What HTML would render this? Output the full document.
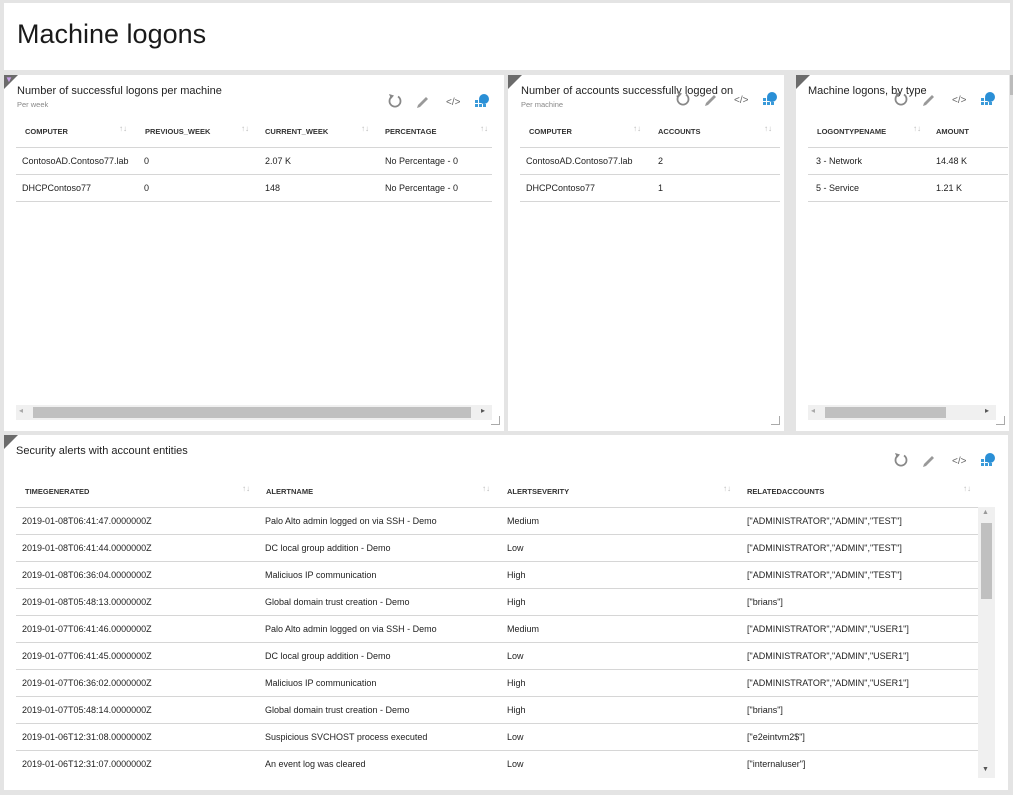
<!DOCTYPE html>
<html><head><meta charset="utf-8"><style>
*{margin:0;padding:0;box-sizing:border-box}
body{width:1013px;height:795px;background:#e4e4e4;font-family:"Liberation Sans",sans-serif;color:#222;position:relative;overflow:hidden}
.a{position:absolute}
.p{position:absolute;background:#fff;overflow:hidden}
.tri{position:absolute;left:0;top:0;width:0;height:0;border-top:14px solid #6b6b6b;border-right:14px solid transparent}
.ttl{position:absolute;font-size:11px;color:#222;white-space:nowrap}
.sub{position:absolute;font-size:7.5px;color:#888}
.th{position:absolute;font-size:7.5px;font-weight:bold;color:#333;white-space:nowrap}
.td{position:absolute;font-size:9px;color:#222;white-space:nowrap}
.ar{position:absolute;font-size:8px;color:#bbb}
.ln{position:absolute;height:1px;background:#d6d6d6}
.rs{position:absolute;width:9px;height:9px;border-right:1px solid #aaa;border-bottom:1px solid #aaa}
</style></head><body>
<div class="p" style="left:4px;top:3px;width:1006px;height:67px"><div class="a" style="left:13px;top:16px;font-size:27px;color:#1a1a1a">Machine logons</div></div>

<!-- panel 1 -->
<div class="p" style="left:4px;top:75px;width:500px;height:356px">
<div class="tri"></div><div class="a" style="left:1px;top:0;font-size:8px;color:#c9a0e8">▼</div>
<div class="ttl" style="left:13px;top:10px">Number of successful logons per machine</div>
<div class="sub" style="left:13px;top:25px">Per week</div>
<svg class="a" style="left:382px;top:18px" width="110" height="16"><path d="M6 3.5 A5.5 5.5 0 1 0 12 3.5" fill="none" stroke="#888" stroke-width="1.8"/><path d="M3 1 L8 2.5 L5 6 Z" fill="#888"/><path d="M32 12 L40 4 L42 6 L34 14 L31 15Z" fill="#999"/><text x="60" y="12" font-size="10" fill="#666" font-family="Liberation Sans">&lt;/&gt;</text><g fill="#3a9ad9"><rect x="89" y="7" width="3" height="3"/><rect x="93" y="7" width="3" height="3"/><rect x="89" y="11" width="3" height="3"/><rect x="93" y="11" width="3" height="3"/><rect x="97" y="11" width="3" height="3"/></g><circle cx="98" cy="6" r="5" fill="#2a8fd6"/></svg>
<div class="th" style="left:21px;top:52px">COMPUTER</div><div class="ar" style="left:115px;top:49px">↑↓</div>
<div class="th" style="left:141px;top:52px">PREVIOUS_WEEK</div><div class="ar" style="left:237px;top:49px">↑↓</div>
<div class="th" style="left:261px;top:52px">CURRENT_WEEK</div><div class="ar" style="left:357px;top:49px">↑↓</div>
<div class="th" style="left:381px;top:52px">PERCENTAGE</div><div class="ar" style="left:476px;top:49px">↑↓</div>
<div class="ln" style="left:12px;top:72px;width:476px"></div>
<div class="td" style="left:18px;top:81px">ContosoAD.Contoso77.lab</div><div class="td" style="left:140px;top:81px">0</div><div class="td" style="left:261px;top:81px">2.07 K</div><div class="td" style="left:381px;top:81px">No Percentage - 0</div>
<div class="ln" style="left:12px;top:99px;width:476px"></div>
<div class="td" style="left:18px;top:108px">DHCPContoso77</div><div class="td" style="left:140px;top:108px">0</div><div class="td" style="left:261px;top:108px">148</div><div class="td" style="left:381px;top:108px">No Percentage - 0</div>
<div class="ln" style="left:12px;top:126px;width:476px"></div>
<div class="a" style="left:12px;top:330px;width:476px;height:15px;background:#f0f0f0"></div>
<div class="a" style="left:29px;top:332px;width:438px;height:11px;background:#c0c0c0"></div>
<div class="a" style="left:15px;top:331px;font-size:8px;color:#aaa">◂</div><div class="a" style="left:477px;top:331px;font-size:8px;color:#555">▸</div>
<div class="rs" style="left:487px;top:341px"></div>
</div>

<!-- panel 2 -->
<div class="p" style="left:508px;top:75px;width:276px;height:356px">
<div class="tri"></div>
<div class="ttl" style="left:13px;top:10px">Number of accounts successfully logged on</div>
<div class="sub" style="left:13px;top:25px">Per machine</div>
<svg class="a" style="left:166px;top:16px" width="110" height="16"><path d="M6 3.5 A5.5 5.5 0 1 0 12 3.5" fill="none" stroke="#888" stroke-width="1.8"/><path d="M3 1 L8 2.5 L5 6 Z" fill="#888"/><path d="M32 12 L40 4 L42 6 L34 14 L31 15Z" fill="#999"/><text x="60" y="12" font-size="10" fill="#666" font-family="Liberation Sans">&lt;/&gt;</text><g fill="#3a9ad9"><rect x="89" y="7" width="3" height="3"/><rect x="93" y="7" width="3" height="3"/><rect x="89" y="11" width="3" height="3"/><rect x="93" y="11" width="3" height="3"/><rect x="97" y="11" width="3" height="3"/></g><circle cx="98" cy="6" r="5" fill="#2a8fd6"/></svg>
<div class="th" style="left:21px;top:52px">COMPUTER</div><div class="ar" style="left:125px;top:49px">↑↓</div>
<div class="th" style="left:150px;top:52px">ACCOUNTS</div><div class="ar" style="left:256px;top:49px">↑↓</div>
<div class="ln" style="left:12px;top:72px;width:260px"></div>
<div class="td" style="left:18px;top:81px">ContosoAD.Contoso77.lab</div><div class="td" style="left:150px;top:81px">2</div>
<div class="ln" style="left:12px;top:99px;width:260px"></div>
<div class="td" style="left:18px;top:108px">DHCPContoso77</div><div class="td" style="left:150px;top:108px">1</div>
<div class="ln" style="left:12px;top:126px;width:260px"></div>
<div class="rs" style="left:263px;top:341px"></div>
</div>

<!-- panel 3 -->
<div class="p" style="left:796px;top:75px;width:213px;height:356px">
<div class="tri"></div>
<div class="ttl" style="left:12px;top:10px">Machine logons, by type</div>
<svg class="a" style="left:96px;top:16px" width="110" height="16"><path d="M6 3.5 A5.5 5.5 0 1 0 12 3.5" fill="none" stroke="#888" stroke-width="1.8"/><path d="M3 1 L8 2.5 L5 6 Z" fill="#888"/><path d="M32 12 L40 4 L42 6 L34 14 L31 15Z" fill="#999"/><text x="60" y="12" font-size="10" fill="#666" font-family="Liberation Sans">&lt;/&gt;</text><g fill="#3a9ad9"><rect x="89" y="7" width="3" height="3"/><rect x="93" y="7" width="3" height="3"/><rect x="89" y="11" width="3" height="3"/><rect x="93" y="11" width="3" height="3"/><rect x="97" y="11" width="3" height="3"/></g><circle cx="98" cy="6" r="5" fill="#2a8fd6"/></svg>
<div class="th" style="left:21px;top:52px">LOGONTYPENAME</div><div class="ar" style="left:117px;top:49px">↑↓</div>
<div class="th" style="left:140px;top:52px">AMOUNT</div>
<div class="ln" style="left:12px;top:72px;width:200px"></div>
<div class="td" style="left:20px;top:81px">3 - Network</div><div class="td" style="left:140px;top:81px">14.48 K</div>
<div class="ln" style="left:12px;top:99px;width:200px"></div>
<div class="td" style="left:20px;top:108px">5 - Service</div><div class="td" style="left:140px;top:108px">1.21 K</div>
<div class="ln" style="left:12px;top:126px;width:200px"></div>
<div class="a" style="left:12px;top:330px;width:188px;height:15px;background:#f0f0f0"></div>
<div class="a" style="left:29px;top:332px;width:121px;height:11px;background:#c0c0c0"></div>
<div class="a" style="left:15px;top:331px;font-size:8px;color:#aaa">◂</div><div class="a" style="left:189px;top:331px;font-size:8px;color:#555">▸</div>
<div class="rs" style="left:200px;top:341px"></div>
</div>
<div class="a" style="left:1010px;top:75px;width:3px;height:20px;background:#bbb"></div>

<!-- bottom -->
<div class="p" style="left:4px;top:435px;width:1004px;height:355px">
<div class="tri"></div>
<div class="ttl" style="left:12px;top:10px">Security alerts with account entities</div>
<svg class="a" style="left:888px;top:17px" width="110" height="16"><path d="M6 3.5 A5.5 5.5 0 1 0 12 3.5" fill="none" stroke="#888" stroke-width="1.8"/><path d="M3 1 L8 2.5 L5 6 Z" fill="#888"/><path d="M32 12 L40 4 L42 6 L34 14 L31 15Z" fill="#999"/><text x="60" y="12" font-size="10" fill="#666" font-family="Liberation Sans">&lt;/&gt;</text><g fill="#3a9ad9"><rect x="89" y="7" width="3" height="3"/><rect x="93" y="7" width="3" height="3"/><rect x="89" y="11" width="3" height="3"/><rect x="93" y="11" width="3" height="3"/><rect x="97" y="11" width="3" height="3"/></g><circle cx="98" cy="6" r="5" fill="#2a8fd6"/></svg>
<div class="th" style="left:21px;top:52px">TIMEGENERATED</div><div class="ar" style="left:238px;top:49px">↑↓</div>
<div class="th" style="left:262px;top:52px">ALERTNAME</div><div class="ar" style="left:478px;top:49px">↑↓</div>
<div class="th" style="left:503px;top:52px">ALERTSEVERITY</div><div class="ar" style="left:719px;top:49px">↑↓</div>
<div class="th" style="left:743px;top:52px">RELATEDACCOUNTS</div><div class="ar" style="left:959px;top:49px">↑↓</div>
<div class="ln" style="left:12px;top:72px;width:962px"></div>
<div class="a" style="left:974px;top:72px;width:17px;height:271px;background:#f0f0f0"></div>
<div class="a" style="left:977px;top:88px;width:11px;height:76px;background:#c0c0c0"></div>
<div class="a" style="left:978px;top:74px;font-size:7px;color:#999">▲</div>
<div class="a" style="left:978px;top:331px;font-size:7px;color:#555">▼</div>
<div id="rows"></div>
</div>
<script>
var d=[["2019-01-08T06:41:47.0000000Z","Palo Alto admin logged on via SSH - Demo","Medium",'["ADMINISTRATOR","ADMIN","TEST"]'],
["2019-01-08T06:41:44.0000000Z","DC local group addition - Demo","Low",'["ADMINISTRATOR","ADMIN","TEST"]'],
["2019-01-08T06:36:04.0000000Z","Maliciuos IP communication","High",'["ADMINISTRATOR","ADMIN","TEST"]'],
["2019-01-08T05:48:13.0000000Z","Global domain trust creation - Demo","High",'["brians"]'],
["2019-01-07T06:41:46.0000000Z","Palo Alto admin logged on via SSH - Demo","Medium",'["ADMINISTRATOR","ADMIN","USER1"]'],
["2019-01-07T06:41:45.0000000Z","DC local group addition - Demo","Low",'["ADMINISTRATOR","ADMIN","USER1"]'],
["2019-01-07T06:36:02.0000000Z","Maliciuos IP communication","High",'["ADMINISTRATOR","ADMIN","USER1"]'],
["2019-01-07T05:48:14.0000000Z","Global domain trust creation - Demo","High",'["brians"]'],
["2019-01-06T12:31:08.0000000Z","Suspicious SVCHOST process executed","Low",'["e2eintvm2$"]'],
["2019-01-06T12:31:07.0000000Z","An event log was cleared","Low",'["internaluser"]']];
var h="",xs=[18,261,503,743];
d.forEach(function(r,i){var t=81+i*27;r.forEach(function(c,j){h+='<div class="td" style="left:'+xs[j]+'px;top:'+t+'px">'+c.replace(/</g,"&lt;")+'</div>'});if(i<9)h+='<div class="ln" style="left:12px;top:'+(t+18)+'px;width:962px"></div>'});
document.getElementById("rows").innerHTML=h;
</script>
</body></html>
